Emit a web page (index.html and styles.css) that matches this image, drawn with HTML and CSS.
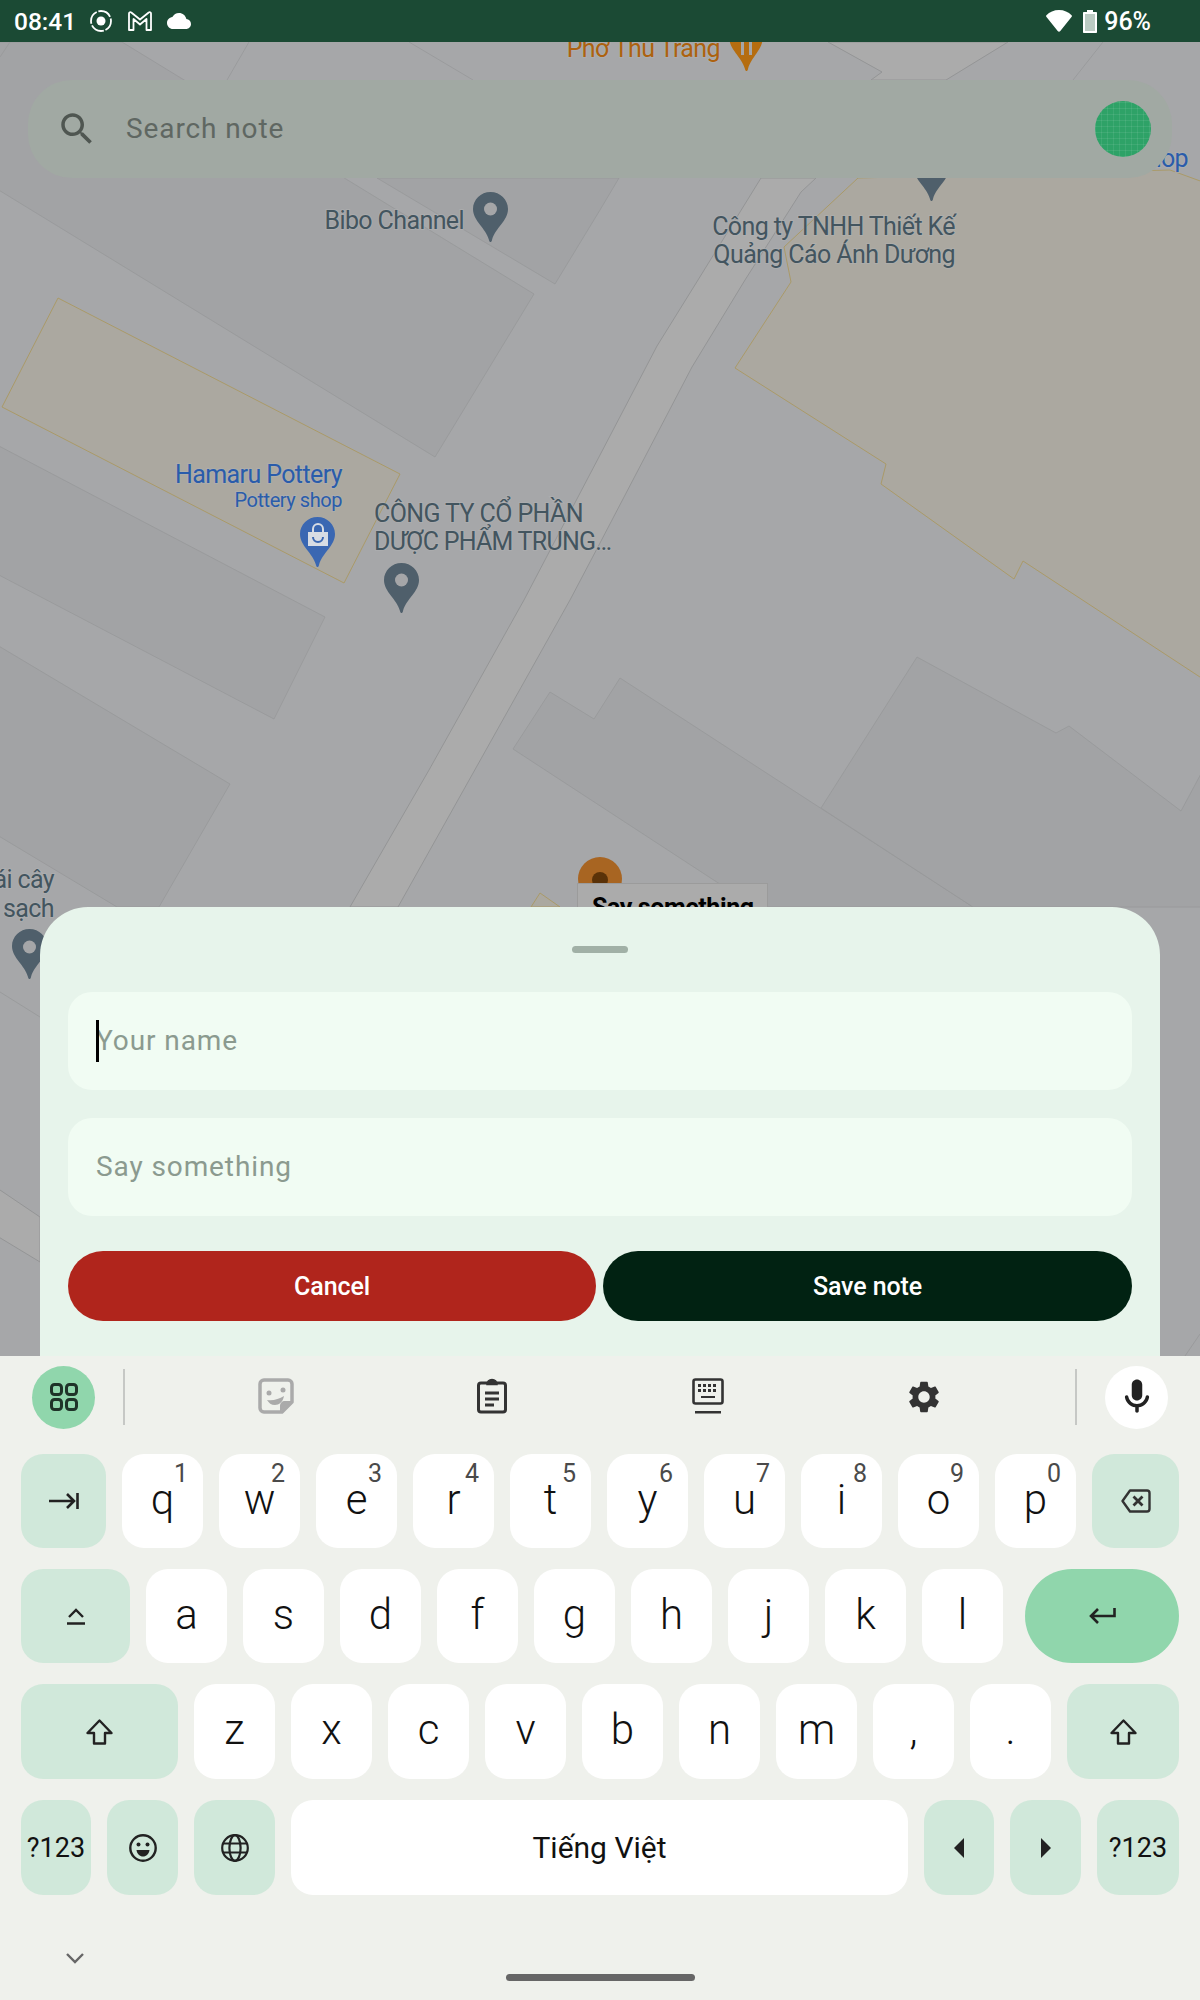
FILE: index.html
```html
<!DOCTYPE html>
<html lang="en">

<head>
    <meta charset="UTF-8" />
    <meta name="viewport" content="width=device-width, initial-scale=1.0" />
    <title>Notes map</title>
    <link rel="stylesheet" href="styles.css">
</head>

<body>
    <div class="screen">
        <!-- map canvas -->
        <svg class="map" width="1200" height="2000" viewBox="0 0 1200 2000">
            <defs>
                <path id="pin" d="M17.5 0C7.8 0 0 7.6 0 17c0 12 13 19 16 31 .5 2.7 2.5 2.7 3 0 3-12 16-19 16-31C35 7.6 27.2 0 17.5 0z" />
            </defs>
            <rect class="land" x="0" y="0" width="1200" height="2000" />
            <polygon class="block" points="122,42 534,294 435,457 -3,189 -3,42" />
            <polygon class="block" points="377,178 555,284 600,210 619,178" />
            <polygon class="block" points="-3,445 325,617 274,719 -3,574" />
            <polygon class="block" points="-3,645 230,784 159,907 117,907 -3,835" />
            <polygon class="block" points="550,692 594,719 620,678 973,907 755,907 513,749" />
            <polygon class="block" points="917,657 1056,733 1069,726 1181,811 1203,770 1203,907 973,907 821,808" />
            <polygon class="road" points="871,80 882,72 828,42 1008,42 946,80" />
            <polygon class="road" points="761,178 698,280 657,346 600,455 524,600 429,770 350,907 398,907 570,600 600,543 692,367 745,280 801,192 816,178" />
            <polygon class="road" points="-3,1188 40,1217 40,1262 -3,1236" />
            <polygon class="lot" points="858,178 784,247 791,282 735,368 886,464 881,484 1014,579 1023,561 1203,679 1203,182 1170,170" />
            <polygon class="lot" points="58,298 400,474 344,583 2,407" />
            <polygon class="lot" points="540,893 531,907 560,907" />
            <line class="edge" x1="249" y1="42" x2="227" y2="80" />
            <line class="edge" x1="0" y1="57" x2="10" y2="42" />
            <line class="edge" x1="409" y1="42" x2="473" y2="80" />
            <line class="edge" x1="1073" y1="80" x2="1103" y2="42" />
            <line class="edge" x1="0" y1="992" x2="40" y2="1017" />
            <line class="edge" x1="1185" y1="1356" x2="1200" y2="1334" />

            <text class="label orange" x="720" y="57" text-anchor="end">Phở Thu Trang</text>
            <path class="pin-orange" d="M729 20h34v16c0 14-12 21-15 33-.5 2.700-2.500 2.700-3 0-3-12-16-19-16-33z" />
            <rect class="fork" x="741" y="42" width="3" height="13" />
            <rect class="fork" x="749" y="42" width="3" height="13" />

            <text class="label blue" x="1188" y="167" text-anchor="end">Shop</text>

            <use href="#pin" class="pin-grey" x="473" y="192" />
            <circle class="pin-dot" cx="490.500" cy="209" r="6.500" />
            <text class="label" x="464" y="229" text-anchor="end">Bibo Channel</text>

            <use href="#pin" class="pin-grey" x="914" y="151" />
            <text class="label" x="955" y="235" text-anchor="end">Công ty TNHH Thiết Kế</text>
            <text class="label" x="955" y="263" text-anchor="end">Quảng Cáo Ánh Dương</text>

            <text class="label blue" x="342" y="483" text-anchor="end">Hamaru Pottery</text>
            <text class="label blue small" x="342" y="507" text-anchor="end">Pottery shop</text>
            <use href="#pin" class="pin-blue" x="300" y="517" />
            <path class="bag" d="M308 532h20v14h-20z" />
            <path class="bag-line" d="M313 532v-3a5 5 0 0 1 10 0v3" />
            <path class="bag-smile" d="M313 537a5 5 0 0 0 10 0" />

            <text class="label" x="374" y="522">CÔNG TY CỔ PHẦN</text>
            <text class="label tight" x="374" y="550">DƯỢC PHẨM TRUNG…</text>
            <use href="#pin" class="pin-grey" x="384" y="563" />
            <circle class="pin-dot" cx="401.500" cy="580" r="6.500" />

            <text class="label" x="54" y="888" text-anchor="end">ái cây</text>
            <text class="label" x="54" y="917" text-anchor="end">sạch</text>
            <use href="#pin" class="pin-grey" x="12" y="929" />
            <circle class="pin-dot" cx="29.500" cy="947" r="6.500" />

            <ellipse class="note-pin" cx="600" cy="879" rx="22" ry="22" />
            <ellipse class="note-hole" cx="600" cy="880" rx="8" ry="8" />
            <rect class="note-tag" x="577.500" y="883.500" width="190" height="60" />
            <text class="note-text" x="592" y="916">Say something</text>
        </svg>

        <div class="statusbar">
            <div class="status-left">
                <span class="status-text">08:41</span>
                <svg class="ic-record" width="24" height="24" viewBox="0 0 24 24">
                    <circle cx="12" cy="12" r="4.500" fill="#fff" />
                    <circle cx="12" cy="12" r="10" fill="none" stroke="#fff" stroke-width="1.800" stroke-dasharray="14 1.700" stroke-dashoffset="3" />
                </svg>
                <svg class="ic-mail" width="24" height="20" viewBox="0 0 24 20">
                    <path d="M1 19V2.500c0-1.300 1.400-1.800 2.300-1L12 8.500l8.700-7c.9-.8 2.300-.3 2.300 1V19h-4.500V8L12 13.500 5.500 8v11z" fill="none" stroke="#fff" stroke-width="1.800" stroke-linejoin="round" />
                </svg>
                <svg class="ic-cloud" width="24" height="16" viewBox="0 4 24 16">
                    <path d="M19.350 10.040C18.670 6.590 15.640 4 12 4 9.110 4 6.600 5.640 5.350 8.040 2.340 8.360 0 10.910 0 14c0 3.310 2.690 6 6 6h13c2.760 0 5-2.240 5-5 0-2.640-2.050-4.780-4.650-4.960z" fill="#fff" />
                </svg>
            </div>
            <div class="status-right">
                <svg class="ic-wifi" width="26" height="22" viewBox="0 0 26 22">
                    <path d="M13 0C8 0 3.500 2 .4 5.200c-.4.400-.5 1-.1 1.500l11.400 14.300c.7.900 1.900.9 2.600 0L25.700 6.700c.4-.5.300-1.100-.1-1.500C22.500 2 18 0 13 0z" fill="#fff" />
                </svg>
                <svg class="ic-battery" width="14" height="23" viewBox="0 0 14 23">
                    <path d="M4 0h6v2h3c.6 0 1 .4 1 1v19c0 .6-.4 1-1 1H1c-.6 0-1-.4-1-1V3c0-.6.4-1 1-1h3z" fill="#fff" />
                    <rect x="2" y="4" width="10" height="17" fill="#bccbc3" />
                </svg>
                <span class="status-text status-pct">96%</span>
            </div>
        </div>

        <div class="search">
            <svg class="search-icon" width="42" height="42" viewBox="0 0 24 24">
                <path d="M15.500 14h-.790l-.280-.270C15.410 12.590 16 11.110 16 9.500 16 5.910 13.090 3 9.500 3S3 5.910 3 9.500 5.910 16 9.500 16c1.610 0 3.090-.590 4.230-1.570l.270.280v.790l5 4.990L20.490 19l-4.990-5zm-6 0C7.010 14 5 11.990 5 9.500S7.010 5 9.500 5 14 7.010 14 9.500 11.990 14 9.500 14z" />
            </svg>
            <span class="search-text">Search note</span>
            <span class="avatar"></span>
        </div>

        <div class="spacer"></div>

        <div class="sheet">
            <div class="handle"></div>
            <div class="field"><span class="caret"></span>Your name</div>
            <div class="field">Say something</div>
            <div class="actions">
                <button class="btn btn-cancel">Cancel</button>
                <button class="btn btn-save">Save note</button>
            </div>
        </div>

        <div class="keyboard">
            <div class="tools">
                <div class="round round-green">
                    <svg width="30" height="30" viewBox="0 0 30 30" fill="none" stroke="#1f3329" stroke-width="3">
                        <rect x="2.500" y="2.500" width="10" height="10" rx="3" />
                        <rect x="17.500" y="2.500" width="10" height="10" rx="3" />
                        <rect x="2.500" y="17.500" width="10" height="10" rx="3" />
                        <rect x="17.500" y="17.500" width="10" height="10" rx="3" />
                    </svg>
                </div>
                <div class="divider"></div>
                <div class="tool-list">
                    <div class="tool">
                        <svg width="36" height="36" viewBox="0 0 36 36">
                            <path d="M6 2h24c2.200 0 4 1.800 4 4v18L24 34H6c-2.200 0-4-1.800-4-4V6c0-2.200 1.800-4 4-4z" fill="none" stroke="#aaa" stroke-width="3.500" stroke-linejoin="round" />
                            <path d="M22 34v-6c0-3 2-5 5-5h7z" fill="#aaa" />
                            <circle cx="11" cy="15" r="2.500" fill="#aaa" />
                            <circle cx="25" cy="12" r="2.500" fill="#aaa" />
                            <path d="M9 22c6 1 12-1 17-4-1 6-5 9-9 9-4 0-6-2-8-5z" fill="#aaa" />
                        </svg>
                    </div>
                    <div class="tool">
                        <svg width="30" height="36" viewBox="0 0 30 36" fill="none" stroke="#333" stroke-width="3">
                            <path d="M10 5H4c-1.400 0-2.500 1.100-2.500 2.500v24C1.500 33 2.600 34 4 34h22c1.400 0 2.500-1 2.500-2.500v-24C28.500 6.100 27.400 5 26 5h-6" />
                            <path d="M10 6.500c0-3 2.200-5 5-5s5 2 5 5z" fill="#333" stroke-width="1.500" />
                            <path d="M8 15h14M8 21h14M8 27h9" />
                        </svg>
                    </div>
                    <div class="tool">
                        <svg width="32" height="36" viewBox="0 0 32 36">
                            <rect x="1.500" y="1.500" width="29" height="24" rx="2" fill="none" stroke="#333" stroke-width="2.600" />
                            <path d="M6 6h3v3H6zM11 6h3v3h-3zM16 6h3v3h-3zM21 6h3v3h-3zM26 6h0M6 11h3v3H6zM11 11h3v3h-3zM16 11h3v3h-3zM21 11h3v3h-3zM9 18h14v2H9z" fill="#333" />
                            <path d="M3 33h26v2.500H3z" fill="#333" />
                        </svg>
                    </div>
                    <div class="tool">
                        <svg width="38" height="38" viewBox="0 0 24 24">
                            <path d="M19.140 12.940c.040-.300.060-.610.060-.940 0-.320-.020-.640-.070-.940l2.030-1.580c.180-.140.230-.410.120-.610l-1.920-3.320c-.120-.220-.370-.290-.590-.220l-2.390.960c-.500-.380-1.030-.700-1.620-.940l-.360-2.540c-.040-.240-.240-.410-.480-.410h-3.840c-.240 0-.430.170-.470.410l-.360 2.540c-.590.240-1.130.570-1.620.940l-2.390-.960c-.220-.080-.470 0-.590.220L2.740 8.870c-.120.210-.080.470.120.610l2.030 1.580c-.050.300-.090.630-.090.940s.020.640.07.940l-2.030 1.580c-.180.140-.230.410-.12.610l1.920 3.320c.120.220.370.290.590.220l2.390-.960c.500.380 1.030.700 1.620.940l.360 2.540c.050.240.240.410.480.410h3.840c.240 0 .440-.170.470-.410l.360-2.540c.590-.240 1.130-.560 1.620-.940l2.390.96c.220.080.470 0 .590-.220l1.920-3.320c.120-.220.070-.470-.120-.610l-2.010-1.580zM12 15.600c-1.980 0-3.600-1.620-3.600-3.600s1.620-3.600 3.600-3.600 3.600 1.620 3.600 3.600-1.620 3.600-3.600 3.600z" fill="#333" />
                        </svg>
                    </div>
                </div>
                <div class="divider"></div>
                <div class="round round-white">
                    <svg width="42" height="42" viewBox="0 0 24 24">
                        <path d="M12 14c1.660 0 3-1.340 3-3V5c0-1.660-1.340-3-3-3S9 3.340 9 5v6c0 1.660 1.340 3 3 3zm5.910-3c-.490 0-.900.360-.980.850C16.520 14.200 14.470 16 12 16s-4.520-1.800-4.930-4.150c-.080-.490-.490-.850-.980-.850-.610 0-1.090.540-1 1.140.490 3 2.890 5.350 5.910 5.780V20c0 .550.450 1 1 1s1-.450 1-1v-2.080c3.020-.430 5.420-2.780 5.910-5.780.100-.600-.390-1.140-1-1.140z" fill="#222" />
                    </svg>
                </div>
            </div>

            <div class="rows">
                <div class="row row-short">
                    <div class="key fn w85">
                        <svg width="30" height="16" viewBox="0 0 30 16" fill="none" stroke="#222" stroke-width="2.600">
                            <path d="M0 8h25M18 1l7 7-7 7M28.500 0v16" />
                        </svg>
                    </div>
                    <div class="key">q<span class="num">1</span></div>
                    <div class="key">w<span class="num">2</span></div>
                    <div class="key">e<span class="num">3</span></div>
                    <div class="key">r<span class="num">4</span></div>
                    <div class="key">t<span class="num">5</span></div>
                    <div class="key">y<span class="num">6</span></div>
                    <div class="key">u<span class="num">7</span></div>
                    <div class="key">i<span class="num">8</span></div>
                    <div class="key">o<span class="num">9</span></div>
                    <div class="key">p<span class="num">0</span></div>
                    <div class="key fn w87">
                        <svg width="30" height="24" viewBox="0 0 30 24" fill="none" stroke="#333" stroke-width="2.400" stroke-linejoin="round">
                            <path d="M9 1.500h17c1.400 0 2.500 1.100 2.500 2.500v16c0 1.400-1.100 2.500-2.500 2.500H9L1.500 12z" />
                            <path d="M12.500 7.500l9 9M21.500 7.500l-9 9" stroke-width="2.800" />
                        </svg>
                    </div>
                </div>
                <div class="row row-short">
                    <div class="key fn w109">
                        <svg width="18" height="17" viewBox="0 0 18 17" fill="none" stroke="#222" stroke-width="2.400">
                            <path d="M2 9l7-7 7 7M0 15.500h18" />
                        </svg>
                    </div>
                    <div class="key">a</div>
                    <div class="key">s</div>
                    <div class="key">d</div>
                    <div class="key">f</div>
                    <div class="key">g</div>
                    <div class="key">h</div>
                    <div class="key">j</div>
                    <div class="key">k</div>
                    <div class="key">l</div>
                    <div class="key enter">
                        <svg width="27" height="17" viewBox="0 0 27 17" fill="none" stroke="#222" stroke-width="2.600">
                            <path d="M25.500 0v8H2M9 1L2 8l7 7" />
                        </svg>
                    </div>
                </div>
                <div class="row row-tall">
                    <div class="key fn w157">
                        <svg class="shift" width="27" height="26" viewBox="0 0 27 26">
                            <path d="M13.500 1.500L1.500 14h6.500v10.500h11V14h6.500z" />
                        </svg>
                    </div>
                    <div class="key">z</div>
                    <div class="key">x</div>
                    <div class="key">c</div>
                    <div class="key">v</div>
                    <div class="key">b</div>
                    <div class="key">n</div>
                    <div class="key">m</div>
                    <div class="key">,</div>
                    <div class="key">.</div>
                    <div class="key fn w112">
                        <svg class="shift" width="27" height="26" viewBox="0 0 27 26">
                            <path d="M13.500 1.500L1.500 14h6.500v10.500h11V14h6.500z" />
                        </svg>
                    </div>
                </div>
                <div class="row row-tall">
                    <div class="key fn small w70">?123</div>
                    <div class="key fn w71">
                        <svg width="28" height="28" viewBox="0 0 28 28">
                            <circle cx="14" cy="14" r="12.700" fill="none" stroke="#222" stroke-width="2.400" />
                            <circle cx="9.500" cy="10.500" r="2" fill="#222" />
                            <circle cx="18.500" cy="10.500" r="2" fill="#222" />
                            <path d="M7.500 16h13c-.5 4-3.300 6.500-6.500 6.500S8 20 7.500 16z" fill="#222" />
                        </svg>
                    </div>
                    <div class="key fn">
                        <svg width="28" height="28" viewBox="0 0 28 28" fill="none" stroke="#222" stroke-width="2.200">
                            <circle cx="14" cy="14" r="12.800" />
                            <ellipse cx="14" cy="14" rx="5.600" ry="12.800" />
                            <path d="M2 9.500h24M2 18.500h24" />
                        </svg>
                    </div>
                    <div class="key space">Tiếng Việt</div>
                    <div class="key fn w70">
                        <svg width="10" height="20" viewBox="0 0 10 20"><path d="M10 0v20L0 10z" fill="#222" /></svg>
                    </div>
                    <div class="key fn w71">
                        <svg width="10" height="20" viewBox="0 0 10 20"><path d="M0 0v20l10-10z" fill="#222" /></svg>
                    </div>
                    <div class="key fn small w82">?123</div>
                </div>
            </div>

            <div class="navbar">
                <svg class="nav-down" width="18" height="11" viewBox="0 0 18 11" fill="none" stroke="#666" stroke-width="2.400">
                    <path d="M1 1l8 8 8-8" />
                </svg>
                <div class="nav-pill"></div>
            </div>
        </div>
    </div>
</body>

</html>
```
FILE: styles.css
```css
body {
    margin: 0;
    font-family: Roboto, "Liberation Sans", sans-serif;
    overflow: hidden;
}

.screen {
    position: relative;
    display: flex;
    flex-direction: column;
    width: 1200px;
    height: 2000px;
    overflow: hidden;
    background: #a6a7a9;
}

/* map */
.map {
    position: absolute;
    left: 0;
    top: 0;
}

.land {
    fill: #a6a7a9;
}

.block {
    fill: #a2a3a5;
    stroke: #979899;
    stroke-width: 0.8;
}

.road {
    fill: #ababab;
    stroke: #949596;
    stroke-width: 1;
}

.lot {
    fill: #aba8a0;
    stroke: #aa9a68;
    stroke-width: 1;
}

.edge {
    stroke: #979899;
    stroke-width: 0.8;
}

.label {
    font-size: 25px;
    letter-spacing: -0.6px;
    fill: #43555f;
    paint-order: stroke;
    stroke: rgba(176, 177, 178, 0.6);
    stroke-width: 2px;
}

.label.tight {
    letter-spacing: -0.75px;
}

.label.blue {
    fill: #2a5cab;
}

.label.small {
    font-size: 20px;
    letter-spacing: -0.45px;
}

.label.orange {
    fill: #ad620f;
}

.pin-grey {
    fill: #4f5f6b;
}

.pin-blue {
    fill: #3a67b2;
}

.pin-orange {
    fill: #b56d10;
}

.pin-dot {
    fill: #a5a6a8;
}

.fork {
    fill: #a5a6a8;
}

.bag {
    fill: #d7dce4;
}

.bag-line {
    fill: none;
    stroke: #d7dce4;
    stroke-width: 2;
}

.bag-smile {
    fill: none;
    stroke: #3a67b2;
    stroke-width: 2;
}

.note-pin {
    fill: #a86522;
}

.note-hole {
    fill: #5a3208;
}

.note-tag {
    fill: #ababab;
    stroke: #9b9b9b;
    stroke-width: 1;
}

.note-text {
    font-size: 25px;
    font-weight: 700;
    letter-spacing: -0.4px;
    fill: #000;
}

/* status bar */
.statusbar {
    position: relative;
    display: flex;
    justify-content: space-between;
    align-items: center;
    height: 42px;
    padding: 0 49px 0 14px;
    background: #1b4a34;
}

.status-text {
    font-size: 24.500px;
    font-weight: 500;
    color: #fff;
}

.status-pct {
    font-size: 25px;
}

.status-left,
.status-right {
    display: flex;
    align-items: center;
}

.ic-record {
    margin-left: 13px;
}

.ic-mail {
    margin-left: 15px;
}

.ic-cloud {
    margin-left: 15px;
}

.ic-battery {
    margin-left: 11px;
    margin-right: 7px;
}

/* search */
.search {
    position: relative;
    display: flex;
    align-items: center;
    height: 98px;
    margin: 38px 28px 0;
    padding: 0 21px 0 28px;
    border-radius: 44px;
    background: #a1a9a3;
}

.search-icon {
    fill: #4f5651;
}

.search-text {
    flex: 1;
    margin-left: 28px;
    padding-bottom: 2px;
    font-size: 28px;
    letter-spacing: 0.9px;
    color: #5f6762;
}

.avatar {
    width: 56px;
    height: 56px;
    border-radius: 50%;
    background-color: #2ea267;
    background-image:
        repeating-linear-gradient(0deg, rgba(255, 255, 255, 0.08) 0 1px, transparent 1px 6px),
        repeating-linear-gradient(90deg, rgba(255, 255, 255, 0.08) 0 1px, transparent 1px 6px);
}

.spacer {
    flex: 1;
}

/* bottom sheet */
.sheet {
    position: relative;
    display: flex;
    flex-direction: column;
    height: 449px;
    box-sizing: border-box;
    margin: 0 40px;
    padding: 39px 28px 0;
    border-radius: 48px 48px 0 0;
    background: #e7f4eb;
}

.handle {
    align-self: center;
    width: 56px;
    height: 7px;
    margin-bottom: 39px;
    border-radius: 4px;
    background: #a1b0a6;
}

.field {
    position: relative;
    display: flex;
    align-items: center;
    box-sizing: border-box;
    height: 98px;
    margin-bottom: 28px;
    padding: 0 0 2px 28px;
    border-radius: 24px;
    background: #f1fcf3;
    font-size: 28px;
    letter-spacing: 0.9px;
    color: #8b9a8f;
}

.caret {
    position: absolute;
    left: 28px;
    top: 28px;
    width: 3px;
    height: 42px;
    background: #000;
}

.actions {
    display: flex;
    gap: 7px;
    margin-top: 7px;
}

.btn {
    flex: 1;
    height: 70px;
    border: none;
    border-radius: 35px;
    font-family: Roboto, "Liberation Sans", sans-serif;
    font-size: 25px;
    font-weight: 500;
    letter-spacing: -0.1px;
    color: #fff;
}

.btn-cancel {
    flex: none;
    width: 528px;
    background: #b0251c;
}

.btn-save {
    background: #012212;
}

/* keyboard */
.keyboard {
    position: relative;
    height: 644px;
    background: #eff1ec;
}

.tools {
    display: flex;
    align-items: center;
    height: 82px;
    padding: 0 32px 16px;
}

.round {
    display: flex;
    justify-content: center;
    align-items: center;
    width: 63px;
    height: 63px;
    border-radius: 50%;
}

.round-green {
    background: #90d6ac;
}

.round-white {
    background: #fff;
}

.divider {
    width: 2px;
    height: 56px;
    margin: 0 28px;
    background: #c6c8c5;
}

.tool-list {
    display: flex;
    flex: 1;
    padding: 0 15px;
}

.tool {
    display: flex;
    flex: 1;
    justify-content: center;
}

.rows {
    display: flex;
    flex-direction: column;
    gap: 21px;
    padding: 0 21px;
}

.row {
    display: flex;
    gap: 16px;
}

.row-short {
    height: 94px;
}

.row-tall {
    height: 95px;
}

.key {
    position: relative;
    display: flex;
    justify-content: center;
    align-items: center;
    flex: none;
    box-sizing: border-box;
    width: 81px;
    padding-bottom: 4px;
    border-radius: 22px;
    background: #fff;
    font-size: 42px;
    font-weight: 300;
    color: #111;
}

.fn {
    padding-bottom: 0;
    background: #d0e8da;
}

.small {
    font-size: 27px;
    font-weight: 400;
}

.w70 { width: 70px; }
.w71 { width: 71px; }
.w82 { width: 82px; }
.w85 { width: 85px; }
.w87 { width: 87px; }
.w109 { width: 109px; }
.w112 { width: 112px; }
.w157 { width: 157px; }

.space {
    width: 617px;
    padding-bottom: 0;
    font-size: 30px;
    font-weight: 400;
}

.enter {
    flex: 1;
    margin-left: 6px;
    padding-bottom: 0;
    border-radius: 47px;
    background: #90d6ac;
}

.num {
    position: absolute;
    top: 7px;
    right: 15px;
    font-size: 25px;
    font-weight: 400;
    line-height: 1;
    color: #4a4a4a;
}

.shift {
    fill: none;
    stroke: #222;
    stroke-width: 2.4;
    stroke-linejoin: round;
}

.navbar {
    display: grid;
    grid-template-columns: 150px 1fr 150px;
    align-items: start;
}

.nav-down {
    justify-self: center;
    margin-top: 58px;
}

.nav-pill {
    justify-self: center;
    width: 189px;
    height: 7px;
    margin-top: 79px;
    border-radius: 4px;
    background: #666;
}
```
